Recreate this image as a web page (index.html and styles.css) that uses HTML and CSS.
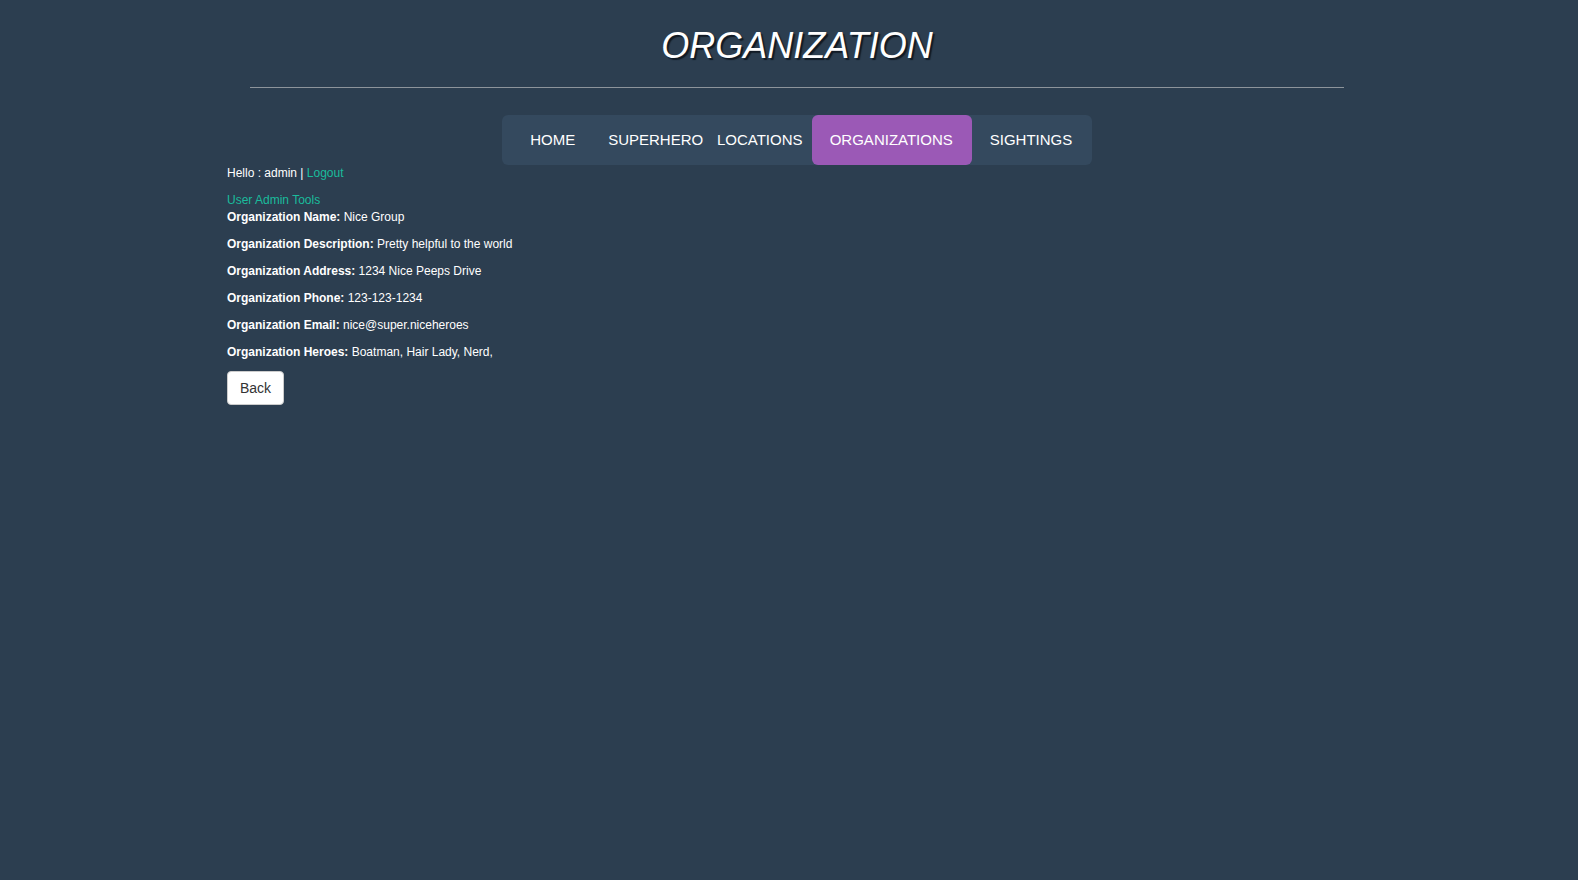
FILE: index.html
```html
<!DOCTYPE html>
<html lang="en">
<head>
<meta charset="utf-8">
<title>Organization</title>
<link rel="stylesheet" href="styles.css">
</head>
<body>
<div class="container">
  <header class="header">
    <h1 class="title">ORGANIZATION</h1>
    <hr class="rule">
    <nav class="nav">
      <a class="nav-link w102" href="#">HOME</a>
      <a class="nav-link w104" href="#">SUPERHERO</a>
      <a class="nav-link w104" href="#">LOCATIONS</a>
      <a class="nav-link padded active" href="#">ORGANIZATIONS</a>
      <a class="nav-link padded" href="#">SIGHTINGS</a>
    </nav>
  </header>
  <main class="content">
    <p class="line">Hello : admin | <a class="link" href="#">Logout</a></p>
    <a class="link" href="#">User Admin Tools</a>
    <p class="line"><b>Organization Name:</b> Nice Group</p>
    <p class="line"><b>Organization Description:</b> Pretty helpful to the world</p>
    <p class="line"><b>Organization Address:</b> 1234 Nice Peeps Drive</p>
    <p class="line"><b>Organization Phone:</b> 123-123-1234</p>
    <p class="line"><b>Organization Email:</b> nice@super.niceheroes</p>
    <p class="line"><b>Organization Heroes:</b> Boatman, Hair Lady, Nerd,</p>
    <button class="btn" type="button">Back</button>
  </main>
</div>
</body>
</html>
```
FILE: styles.css
```css
* { box-sizing: border-box; }
html, body { margin: 0; }
body {
  background: #2c3e50;
  color: #fff;
  font-family: "Liberation Sans", Arial, sans-serif;
  font-size: 12px;
  line-height: 17px;
  padding-left: 16px;
}
.container {
  width: 1170px;
  margin: 0 auto;
  padding: 0 15px;
}
.header { display: flex; flex-direction: column; }
.title {
  margin: 26px 0 0;
  font-size: 36px;
  line-height: 40px;
  font-style: italic;
  font-weight: normal;
  text-align: center;
  color: #fff;
  text-shadow: 2px 2px 1px #111a24;
}
.rule {
  width: 96%;
  margin: 21px auto 0;
  border: 0;
  border-top: 1px solid #8d949b;
  height: 0;
}
.nav {
  align-self: center;
  display: flex;
  margin-top: 27px;
  height: 50px;
  padding-right: 2px;
  background: #34495e;
  border-radius: 6px;
}
.nav-link {
  display: flex;
  align-items: center;
  justify-content: center;
  padding-bottom: 2px;
  color: #fff;
  text-decoration: none;
  font-size: 15px;
  white-space: nowrap;
  border-radius: 6px;
}
.w102 { width: 102px; }
.w104 { width: 104px; }
.padded { padding: 0 18px 2px; }
.active { background: #9b59b6; padding-right: 19px; }
.content { padding-top: 0; }
.line { margin: 0 0 10px; }
.link { color: #1abc9c; text-decoration: none; }
.btn {
  display: block;
  margin-top: 1px;
  height: 34px;
  padding: 6px 12px;
  font-family: "Liberation Sans", Arial, sans-serif;
  font-size: 14px;
  line-height: 20px;
  color: #333;
  background: #fff;
  border: 1px solid #ccc;
  border-radius: 4px;
}
```
